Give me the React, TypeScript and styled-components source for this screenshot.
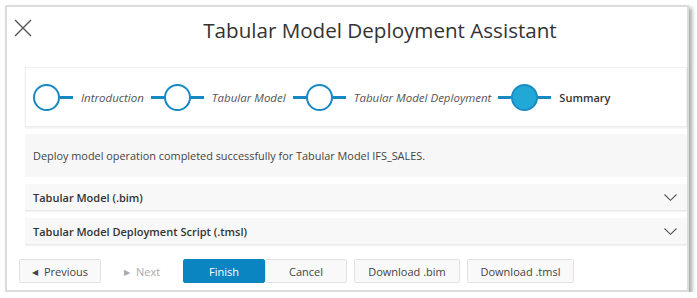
import styled, { createGlobalStyle } from 'styled-components'

const Global = createGlobalStyle`
  html, body {
    margin: 0;
    padding: 0;
    background: #fff;
  }
  body {
    font-family: "Open Sans", "Noto Sans", sans-serif;
    color: #333;
  }
`

const Dialog = styled.section`
  box-sizing: border-box;
  margin: 5px 0 0 5px;
  width: 684px;
  height: 287px;
  border: 2px solid #dcdcdc;
  background: #fff;
  box-shadow: 3px 3px 4px rgba(0, 0, 0, 0.35);
  display: flex;
  flex-direction: column;
`

const Header = styled.header`
  position: relative;
  height: 45px;
  display: flex;
  align-items: center;
  justify-content: center;
`

const CloseButton = styled.button`
  position: absolute;
  left: 6px;
  top: 12px;
  width: 20px;
  height: 20px;
  padding: 0;
  border: 0;
  background: transparent;
  cursor: pointer;
`

const Title = styled.h1`
  margin: 0 0 0 66px;
  font-size: 20.6px;
  font-weight: 400;
  color: #333;
`

const Body = styled.div`
  padding: 15px 0 0 18px;
  display: flex;
  flex-direction: column;
  gap: 7px;
`

const StepperPanel = styled.div`
  box-sizing: border-box;
  height: 60px;
  background: #fff;
  border: 1px solid #efefef;
  box-shadow: 0 1px 2px rgba(0, 0, 0, 0.08);
  display: flex;
  align-items: center;
  padding-left: 7px;
`

const Step = styled.div`
  display: flex;
  align-items: center;
`

const Connector = styled.span`
  width: 13px;
  height: 3px;
  background: #1688c3;
`

const Circle = styled.span<{ $active?: boolean }>`
  box-sizing: border-box;
  width: 27px;
  height: 27px;
  border-radius: 50%;
  border: 2px solid ${p => (p.$active ? '#1a8cc0' : '#1688c3')};
  background: ${p => (p.$active ? '#22a8d6' : '#fff')};
`

const StepLabel = styled.span<{ $active?: boolean }>`
  margin: 0 7px 0 8px;
  font-size: ${p => (p.$active ? '11px' : '11.5px')};
  font-style: ${p => (p.$active ? 'normal' : 'italic')};
  font-weight: ${p => (p.$active ? 600 : 400)};
  color: ${p => (p.$active ? '#333' : '#555')};
  white-space: nowrap;
`

const Message = styled.div`
  height: 43px;
  background: #f7f7f7;
  display: flex;
  align-items: center;
  padding-left: 8px;
  font-size: 10.9px;
  color: #444;
`

const AccordionHeader = styled.div`
  box-sizing: border-box;
  height: 27px;
  background: #f8f8f8;
  border-bottom: 1px solid #ebebeb;
  box-shadow: 0 1px 1px rgba(0, 0, 0, 0.05);
  display: flex;
  align-items: center;
  justify-content: space-between;
  padding: 0 10px 0 8px;
  font-size: 11px;
  font-weight: 600;
  color: #333;
`

const Footer = styled.div`
  margin: 14px 0 0 12px;
  display: flex;
  gap: 7px;
`

const ButtonGroup = styled.div`
  display: flex;
`

type Variant = 'default' | 'primary' | 'disabled'

const Button = styled.button<{ $variant?: Variant; $width?: number }>`
  box-sizing: border-box;
  height: 24px;
  width: ${p => p.$width ?? 82}px;
  padding: 0;
  font-family: inherit;
  font-size: 11px;
  white-space: nowrap;
  display: flex;
  align-items: center;
  justify-content: center;
  gap: 6px;
  cursor: pointer;
  border-radius: 2px;
  border: 1px solid ${p => (p.$variant === 'primary' ? '#0a85c2' : p.$variant === 'disabled' ? 'transparent' : '#e2e2e2')};
  background: ${p => (p.$variant === 'primary' ? '#0a85c2' : p.$variant === 'disabled' ? '#fff' : '#f9f9f9')};
  color: ${p => (p.$variant === 'primary' ? '#fff' : p.$variant === 'disabled' ? '#aaa' : '#444')};
`

const Caret = styled.span<{ $dim?: boolean }>`
  font-size: 8px;
  color: ${p => (p.$dim ? '#aaa' : '#444')};
`

const steps = ['Introduction', 'Tabular Model', 'Tabular Model Deployment', 'Summary']

function Chevron() {
  return (
    <svg width="13" height="7" viewBox="0 0 13 7">
      <path d="M0.5 0.5 L6.5 6.3 L12.5 0.5" fill="none" stroke="#555" strokeWidth="1.1" />
    </svg>
  )
}

export default function App() {
  return (
    <>
      <Global />
      <Dialog>
        <Header>
          <CloseButton aria-label="Close">
            <svg width="18" height="18" viewBox="0 0 18 18">
              <path d="M1 1 L17 17 M17 1 L1 17" stroke="#555" strokeWidth="1.4" />
            </svg>
          </CloseButton>
          <Title>Tabular Model Deployment Assistant</Title>
        </Header>
        <Body>
          <StepperPanel>
            {steps.map((s, i) => {
              const active = i === steps.length - 1
              return (
                <Step key={s}>
                  {i > 0 && <Connector />}
                  <Circle $active={active} />
                  <Connector />
                  <StepLabel $active={active}>{s}</StepLabel>
                </Step>
              )
            })}
          </StepperPanel>
          <Message>Deploy model operation completed successfully for Tabular Model IFS_SALES.</Message>
          <AccordionHeader>
            Tabular Model (.bim)
            <Chevron />
          </AccordionHeader>
          <AccordionHeader>
            Tabular Model Deployment Script (.tmsl)
            <Chevron />
          </AccordionHeader>
        </Body>
        <Footer>
          <ButtonGroup>
            <Button><Caret>◀</Caret>Previous</Button>
            <Button $variant="disabled"><Caret $dim>▶</Caret>Next</Button>
            <Button $variant="primary">Finish</Button>
            <Button>Cancel</Button>
          </ButtonGroup>
          <Button $width={106}>Download .bim</Button>
          <Button $width={107}>Download .tmsl</Button>
        </Footer>
      </Dialog>
    </>
  )
}
